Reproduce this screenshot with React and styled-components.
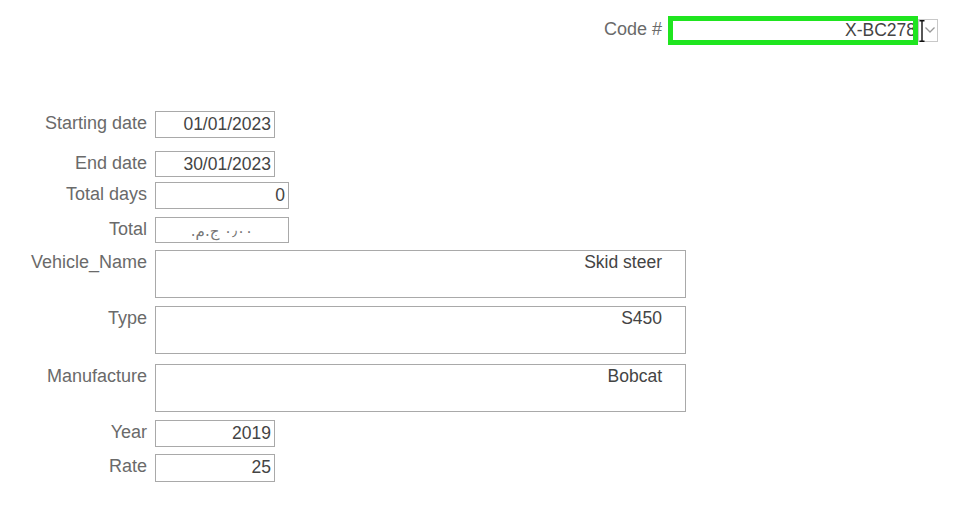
import styled, { createGlobalStyle } from "styled-components";

const GlobalStyle = createGlobalStyle`
  html, body {
    margin: 0;
    padding: 0;
    background: #fff;
  }
  body {
    font-family: "Liberation Sans", Arial, sans-serif;
  }
`;

const rows = [
  { label: "Starting date", value: "01/01/2023", width: 120, height: 27, gap: 0 },
  { label: "End date", value: "30/01/2023", width: 120, height: 26, gap: 13 },
  { label: "Total days", value: "0", width: 134, height: 27, gap: 5 },
  { label: "Total", value: "٠٫٠٠ ج.م.", width: 134, height: 26, gap: 8, money: true },
  { label: "Vehicle_Name", value: "Skid steer", width: 531, height: 48, gap: 7, wide: true },
  { label: "Type", value: "S450", width: 531, height: 48, gap: 8, wide: true },
  { label: "Manufacture", value: "Bobcat", width: 531, height: 48, gap: 10, wide: true },
  { label: "Year", value: "2019", width: 120, height: 27, gap: 8 },
  { label: "Rate", value: "25", width: 120, height: 28, gap: 7 },
];

export default function App() {
  return (
    <Page>
      <GlobalStyle />
      <Header>
        <CodeLabel>Code #</CodeLabel>
        <CodeBox>
          <CodeText>X-BC278</CodeText>
        </CodeBox>
        <DropButton>
          <svg width="12" height="8" viewBox="0 0 12 8">
            <path d="M1.5 1.5 L6 6 L10.5 1.5" fill="none" stroke="#999" strokeWidth="1.3" />
          </svg>
          <Caret>
            <svg width="6" height="22" viewBox="0 0 6 22">
              <path d="M0.5 0.8 H5.5 M3 0.8 V21.2 M0.5 21.2 H5.5" fill="none" stroke="#111" strokeWidth="1.4" />
            </svg>
          </Caret>
        </DropButton>
      </Header>
      <Form>
        {rows.map((r) => (
          <Row key={r.label} $gap={r.gap}>
            <Label>{r.label}</Label>
            <Field $w={r.width} $h={r.height} $wide={r.wide} $money={r.money}>
              {r.value}
            </Field>
          </Row>
        ))}
      </Form>
    </Page>
  );
}

const Page = styled.div`
  width: 954px;
  height: 521px;
  box-sizing: border-box;
  padding-top: 15px;
  overflow: hidden;
`;

const Header = styled.div`
  display: flex;
  align-items: center;
  height: 30px;
  padding-left: 600px;
`;

const CodeLabel = styled.span`
  width: 62px;
  font-size: 18px;
  color: #6a6a6a;
  text-align: right;
  margin-right: 6px;
  position: relative;
  top: -1px;
`;

const CodeBox = styled.div`
  width: 250px;
  height: 29px;
  box-sizing: border-box;
  border: 5px solid #1fe51f;
  font-size: 17.5px;
  color: #444;
  line-height: 19px;
  overflow: hidden;
  white-space: nowrap;
  display: flex;
  justify-content: flex-end;
`;

const CodeText = styled.span`
  margin-right: -3px;
`;

const DropButton = styled.div`
  position: relative;
  width: 20px;
  height: 23px;
  box-sizing: border-box;
  border: 1px solid #c8c8c8;
  display: flex;
  align-items: center;
  justify-content: center;
  padding-left: 4px;
`;

const Caret = styled.div`
  position: absolute;
  left: 0px;
  top: 0px;
  line-height: 0;
`;

const Form = styled.div`
  display: flex;
  flex-direction: column;
  margin-top: 66px;
`;

const Row = styled.div`
  display: flex;
  align-items: flex-start;
  margin-top: ${(p) => p.$gap}px;
`;

const Label = styled.div`
  width: 147px;
  margin-right: 8px;
  text-align: right;
  font-size: 18px;
  color: #6a6a6a;
  line-height: 20px;
  padding-top: 2px;
  white-space: nowrap;
`;

const Field = styled.div`
  width: ${(p) => p.$w}px;
  height: ${(p) => p.$h}px;
  box-sizing: border-box;
  border: 1px solid #a9a9a9;
  font-size: ${(p) => (p.$money ? "15px" : "17.5px")};
  font-family: ${(p) => (p.$money ? '"DejaVu Sans", sans-serif' : "inherit")};
  color: ${(p) => (p.$money ? "#777" : "#444")};
  direction: ${(p) => (p.$money ? "rtl" : "ltr")};
  text-align: ${(p) => (p.$money ? "center" : "right")};
  padding-right: ${(p) => (p.$wide ? "23px" : p.$money ? "0" : "3px")};
  line-height: ${(p) => (p.$money ? "24px" : "22px")};
  padding-top: ${(p) => (p.$wide ? "0" : "1px")};
  white-space: nowrap;
`;
